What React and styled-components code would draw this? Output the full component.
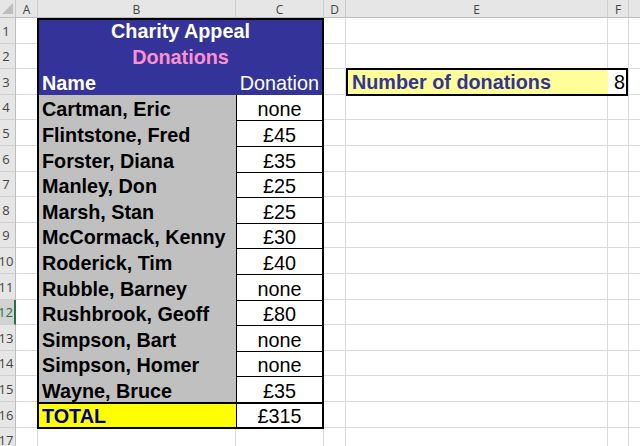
import React from 'react';
import styled, { createGlobalStyle, css } from 'styled-components';

const GlobalStyle = createGlobalStyle`
  html, body {
    margin: 0;
    padding: 0;
    background: #fff;
    overflow: hidden;
  }
`;

const ROW_H = 25.6;
const COLUMNS = ['A', 'B', 'C', 'D', 'E', 'F', 'G'];
const ROWS = Array.from({ length: 17 }, (_, i) => i + 1);

const donors = [
  ['Cartman, Eric', 'none'],
  ['Flintstone, Fred', '£45'],
  ['Forster, Diana', '£35'],
  ['Manley, Don', '£25'],
  ['Marsh, Stan', '£25'],
  ['McCormack, Kenny', '£30'],
  ['Roderick, Tim', '£40'],
  ['Rubble, Barney', 'none'],
  ['Rushbrook, Geoff', '£80'],
  ['Simpson, Bart', 'none'],
  ['Simpson, Homer', 'none'],
  ['Wayne, Bruce', '£35'],
];

// the sheet itself: row header + columns A..G
const Sheet = styled.div`
  display: grid;
  grid-template-columns: 16px 22px 198px 88px 22px 262px 21px 64px;
  grid-template-rows: 18px repeat(17, ${ROW_H}px);
  width: 640px;
  height: 446px;
  overflow: hidden;
  font-family: "Liberation Sans", Arial, sans-serif;
`;

const Corner = styled.div`
  grid-column: 1;
  grid-row: 1;
  background: #e6e6e6;
  border-right: 1px solid #c8c8c8;
  border-bottom: 1px solid #bdbdbd;
  box-sizing: border-box;
  display: flex;
  align-items: flex-end;
  justify-content: flex-end;
  padding: 0 2px 3px 0;
`;

const ColHead = styled.div`
  grid-row: 1;
  grid-column: ${p => p.$col + 1};
  background: #e6e6e6;
  border-right: 1px solid #cdcdcd;
  border-bottom: 1px solid #bdbdbd;
  box-sizing: border-box;
  display: flex;
  align-items: center;
  justify-content: center;
  font-family: "Open Sans", "Noto Sans", sans-serif;
  font-size: 12px;
  color: #444;
  padding-top: 1px;
`;

const RowHead = styled.div`
  grid-column: 1;
  grid-row: ${p => p.$row + 1};
  background: ${p => (p.$active ? '#d2d2d2' : '#e6e6e6')};
  border-right: ${p => (p.$active ? '2px solid #217346' : '1px solid #bdbdbd')};
  border-bottom: 1px solid #d0d0d0;
  box-sizing: border-box;
  display: flex;
  align-items: flex-end;
  justify-content: center;
  padding: 0 3px 3px 0;
  font-family: "Open Sans", "Noto Sans", sans-serif;
  font-size: 13px;
  color: ${p => (p.$active ? '#217346' : '#444')};
  white-space: nowrap;
`;

const Cell = styled.div`
  grid-column: ${p => p.$col + 1};
  grid-row: ${p => p.$row + 1};
  border-right: 1px solid #dadada;
  border-bottom: 1px solid #dadada;
  box-sizing: border-box;
  background: #fff;
`;

// the boxed donations table over B1:C16
const DonationTable = styled.div`
  grid-column: 3 / 5;
  grid-row: 2 / 18;
  margin: 0 0 -1px -1px;
  border: 2px solid #000;
  box-sizing: border-box;
  display: grid;
  grid-template-columns: 197px 1fr;
  grid-template-rows: ${ROW_H - 2}px repeat(14, ${ROW_H}px) 1fr;
  z-index: 1;
`;

const textCell = css`
  display: flex;
  align-items: flex-end;
  box-sizing: border-box;
  padding: 0 3px 0 3px;
  font-size: 19.8px;
  line-height: 22px;
  white-space: nowrap;
  overflow: hidden;
`;

const Banner = styled.div`
  ${textCell};
  grid-column: 1 / 3;
  justify-content: center;
  background: #333399;
  font-weight: bold;
  color: ${p => p.$color};
  padding-bottom: ${p => p.$pb}px;
`;

const HeadCell = styled.div`
  ${textCell};
  background: #333399;
  color: #fff;
  font-weight: ${p => (p.$bold ? 'bold' : 'normal')};
  justify-content: ${p => (p.$right ? 'flex-end' : 'flex-start')};
  padding-bottom: 1px;
`;

const NameCell = styled.div`
  ${textCell};
  background: ${p => (p.$total ? '#ffff00' : '#c0c0c0')};
  color: ${p => (p.$total ? '#000080' : '#000')};
  font-weight: bold;
  padding-left: 3px;
  ${p => p.$total && css`border-top: 2px solid #000;`}
`;

const AmountCell = styled.div`
  ${textCell};
  justify-content: center;
  background: #fff;
  color: #000;
  border-left: 1px solid #000;
  border-top: ${p => (p.$total ? '2px' : '1px')} solid #000;
  ${p => p.$first && css`border-top: none;`}
`;

// E3:F3 count box
const CountBox = styled.div`
  grid-column: 6 / 8;
  grid-row: 4 / 5;
  margin: -1px 1px -1px 0;
  border: 2px solid #000;
  box-sizing: border-box;
  display: grid;
  grid-template-columns: 1fr 18px;
  z-index: 1;
`;

const CountLabel = styled.div`
  ${textCell};
  background: #ffff99;
  color: #333399;
  font-weight: bold;
  padding-left: 4px;
  padding-bottom: 1px;
`;

const CountValue = styled.div`
  ${textCell};
  background: #fff;
  justify-content: flex-end;
  padding-right: 1px;
  padding-bottom: 1px;
`;

const CornerMark = () => (
  <svg width="11" height="11" viewBox="0 0 11 11">
    <polygon points="11,0 11,11 0,11" fill="#bdbdbd" />
  </svg>
);

export default function App() {
  return (
    <>
      <GlobalStyle />
      <Sheet>
        <Corner>
          <CornerMark />
        </Corner>
        {COLUMNS.map((c, ci) => (
          <ColHead key={c} $col={ci + 1}>{c}</ColHead>
        ))}
        {ROWS.map(r => (
          <React.Fragment key={r}>
            <RowHead $row={r} $active={r === 12}>{r}</RowHead>
            {COLUMNS.map((c, ci) => (
              <Cell key={c} $row={r} $col={ci + 1} />
            ))}
          </React.Fragment>
        ))}

        <DonationTable>
          <Banner $color="#fff" $pb={2}>Charity Appeal</Banner>
          <Banner $color="#ff8fcf" $pb={1}>Donations</Banner>
          <HeadCell $bold>Name</HeadCell>
          <HeadCell $right>Donation</HeadCell>
          {donors.map(([name, amount], i) => (
            <React.Fragment key={name}>
              <NameCell>{name}</NameCell>
              <AmountCell $first={i === 0}>{amount}</AmountCell>
            </React.Fragment>
          ))}
          <NameCell $total>TOTAL</NameCell>
          <AmountCell $total>£315</AmountCell>
        </DonationTable>

        <CountBox>
          <CountLabel>Number of donations</CountLabel>
          <CountValue>8</CountValue>
        </CountBox>
      </Sheet>
    </>
  );
}
